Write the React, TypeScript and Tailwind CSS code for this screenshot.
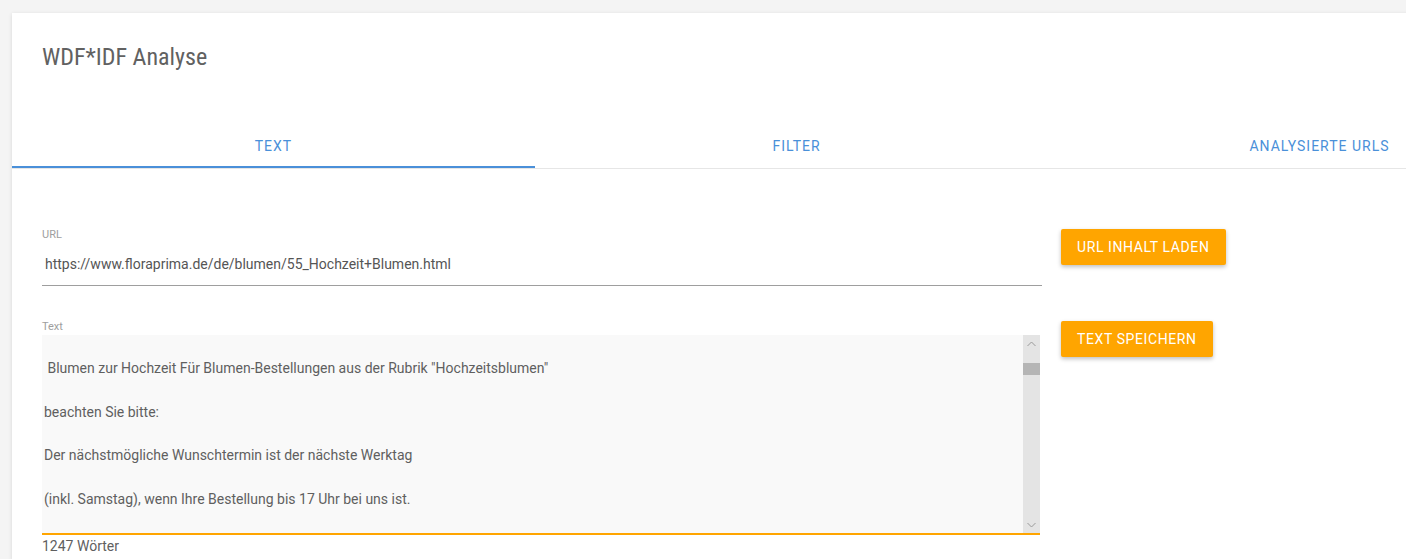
import { useState } from 'react';

const tabs = ['Text', 'Filter', 'Analysierte URLs'];

const textLines = [
  '',
  ' Blumen zur Hochzeit Für Blumen-Bestellungen aus der Rubrik "Hochzeitsblumen"',
  '',
  'beachten Sie bitte:',
  '',
  'Der nächstmögliche Wunschtermin ist der nächste Werktag',
  '',
  '(inkl. Samstag), wenn Ihre Bestellung bis 17 Uhr bei uns ist.',
];

function Chevron({ up }: { up?: boolean }) {
  return (
    <svg width="9" height="6" viewBox="0 0 9 6" className="text-[#9a9a9a]">
      <path d={up ? 'M0.5 5 L4.5 1 L8.5 5' : 'M0.5 1 L4.5 5 L8.5 1'} fill="none" stroke="currentColor" strokeWidth="1" />
    </svg>
  );
}

export default function App() {
  const [active, setActive] = useState(0);
  const [url, setUrl] = useState('https://www.floraprima.de/de/blumen/55_Hochzeit+Blumen.html');

  return (
    <div className="min-h-screen bg-[#f4f4f4] pt-[13px] pl-[12px] overflow-hidden font-['Roboto',sans-serif]">
      <div className="w-[1569px] bg-white shadow-[0_1px_4px_rgba(0,0,0,0.12)]">
        {/* Header */}
        <h1 className="pl-[30px] pt-[28px] font-['Roboto_Condensed','Roboto',sans-serif] font-stretch-condensed text-[24px] leading-[32px] text-[#616161]">
          WDF*IDF Analyse
        </h1>

        {/* Tabs */}
        <div className="mt-[47px] flex border-b border-[#e6e6e6]">
          {tabs.map((tab, i) => (
            <button
              key={tab}
              onClick={() => setActive(i)}
              className={`flex-1 h-[48px] pt-[4px] text-[14px] uppercase tracking-[1px] text-[#4a90d9] ${
                active === i ? 'border-b-2 border-[#4a90d9] pt-[6px]' : ''
              }`}
            >
              {tab}
            </button>
          ))}
        </div>

        {/* Form */}
        <div className="pl-[30px] pt-[59px] pb-[4px] flex flex-col gap-[34px]">
          <div className="flex items-start gap-[19px]">
            <label className="w-[1000px] flex flex-col border-b border-[#9e9e9e]">
              <span className="text-[11px] leading-[14px] text-[#9e9e9e]">URL</span>
              <input
                value={url}
                onChange={(e) => setUrl(e.target.value)}
                className="mt-[12px] mb-[11px] pl-[3px] text-[14px] leading-[20px] text-[#555] outline-none bg-transparent"
              />
            </label>
            <button className="mt-[1px] h-[36px] px-[16px] rounded-[2px] bg-[#ffa500] text-white text-[14px] uppercase tracking-[0.6px] shadow-[0_2px_4px_rgba(0,0,0,0.25)]">
              URL Inhalt laden
            </button>
          </div>

          <div className="flex items-start gap-[19px]">
            <div className="w-[1000px] flex flex-col">
              <span className="text-[11px] leading-[14px] text-[#9e9e9e]">Text</span>
              <div className="mt-[1px] w-[998px] h-[200px] flex bg-[#f9f9f9] border-b-2 border-[#ffa500]">
                <div className="flex-1 overflow-hidden pl-[2px] text-[14px] leading-[22px] text-[#5f5f5f] whitespace-pre">
                  {textLines.map((line, i) => (
                    <div key={i} className="h-[21.9px]">{line}</div>
                  ))}
                </div>
                <div className="w-[17px] bg-[#e4e4e4] flex flex-col items-center">
                  <div className="h-[17px] flex items-center justify-center"><Chevron up /></div>
                  <div className="mt-[11px] w-full h-[12px] bg-[#b5b5b5]" />
                  <div className="flex-1" />
                  <div className="h-[17px] flex items-center justify-center"><Chevron /></div>
                </div>
              </div>
              <span className="mt-[1px] text-[14px] leading-[20px] text-[#5f5f5f]">1247 Wörter</span>
            </div>
            <button className="mt-[1px] h-[36px] px-[16px] rounded-[2px] bg-[#ffa500] text-white text-[14px] uppercase tracking-[0.6px] shadow-[0_2px_4px_rgba(0,0,0,0.25)]">
              Text speichern
            </button>
          </div>
        </div>
      </div>
    </div>
  );
}
